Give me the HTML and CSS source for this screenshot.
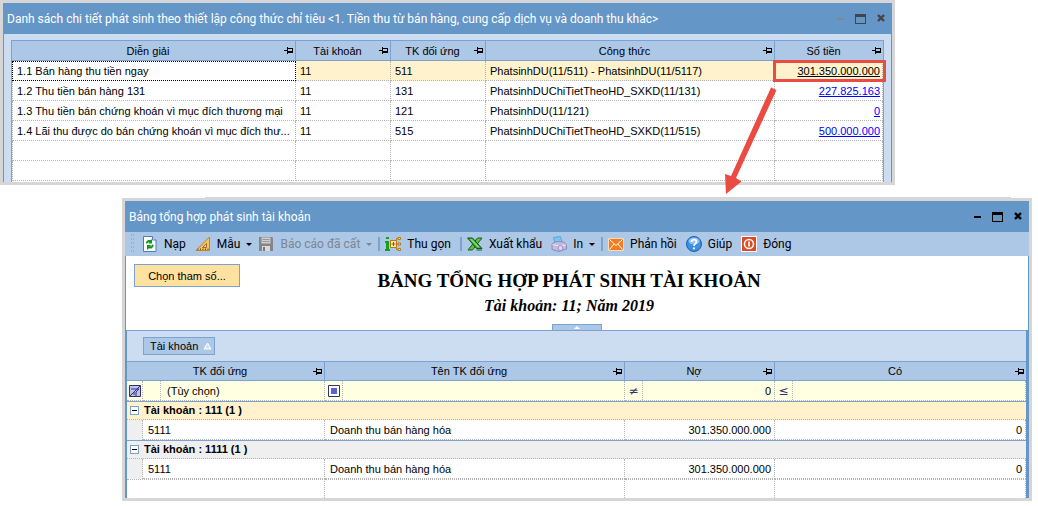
FILE: index.html
```html
<!DOCTYPE html>
<html lang="vi">
<head>
<meta charset="utf-8">
<title>Bảng tổng hợp phát sinh tài khoản</title>
<link rel="stylesheet" href="styles.css">
</head>
<body>
<svg class="defs" aria-hidden="true">
  <symbol id="pin" viewBox="0 0 9 7"><path d="M0 3h3V0h1v1h5v5H4v1H3V4H0zM4 2v2h4V2z" fill="#000" fill-rule="evenodd" shape-rendering="crispEdges"/></symbol>
  <symbol id="min" viewBox="0 0 12 12"><path d="M2 5h7v2H2z" fill="currentColor"/></symbol>
  <symbol id="max" viewBox="0 0 12 12"><path d="M0 1h11v10H0zM1 4v6h9V4z" fill="currentColor" fill-rule="evenodd"/></symbol>
  <symbol id="close" viewBox="0 0 12 12"><path d="M3 2l6 6M9 2l-6 6" stroke="currentColor" stroke-width="2.400" fill="none"/></symbol>
</svg>

<main class="desktop">
  <section class="window window-detail" aria-label="Danh sách chi tiết">
    <header class="titlebar">
      <h1 class="title">Danh sách chi tiết phát sinh theo thiết lập công thức chỉ tiêu &lt;1. Tiền thu từ bán hàng, cung cấp dịch vụ và doanh thu khác&gt;</h1>
      <div class="controls inactive">
        <button class="ctl dim" aria-label="Thu nhỏ"><svg><use href="#min"/></svg></button>
        <button class="ctl" aria-label="Phóng to"><svg><use href="#max"/></svg></button>
        <button class="ctl" aria-label="Đóng cửa sổ"><svg><use href="#close"/></svg></button>
      </div>
    </header>
    <div class="detail-body">
      <div class="panel">
        <table class="grid">
          <colgroup><col class="c-desc"><col class="c-acc"><col class="c-acc"><col><col class="c-amount"></colgroup>
          <thead>
            <tr>
              <th><div class="head"><span>Diễn giải</span><svg class="pin"><use href="#pin"/></svg></div></th>
              <th><div class="head"><span>Tài khoản</span><svg class="pin"><use href="#pin"/></svg></div></th>
              <th><div class="head"><span>TK đối ứng</span><svg class="pin"><use href="#pin"/></svg></div></th>
              <th><div class="head"><span>Công thức</span><svg class="pin"><use href="#pin"/></svg></div></th>
              <th><div class="head"><span>Số tiền</span><svg class="pin"><use href="#pin"/></svg></div></th>
            </tr>
          </thead>
          <tbody>
            <tr class="selected"><td class="focused">1.1 Bán hàng thu tiền ngay</td><td>11</td><td>511</td><td>PhatsinhDU(11/511) - PhatsinhDU(11/5117)</td>
              <td class="num marked"><a href="#report">301.350.000.000</a><span class="mark"></span>
                <svg class="arrow" viewBox="0 0 54 108" aria-hidden="true"><path d="M48 1.500L53.500 4L13 92L18.500 95.500L3 108L2 88L8 90z" fill="#ea4b43"/></svg></td></tr>
            <tr><td>1.2 Thu tiền bán hàng 131</td><td>11</td><td>131</td><td>PhatsinhDUChiTietTheoHD_SXKD(11/131)</td><td class="num"><a href="#report">227.825.163</a></td></tr>
            <tr><td>1.3 Thu tiền bán chứng khoán vì mục đích thương mại</td><td>11</td><td>121</td><td>PhatsinhDU(11/121)</td><td class="num"><a href="#report">0</a></td></tr>
            <tr><td>1.4 Lãi thu được do bán chứng khoán vì mục đích thư...</td><td>11</td><td>515</td><td>PhatsinhDUChiTietTheoHD_SXKD(11/515)</td><td class="num"><a href="#report">500.000.000</a></td></tr>
            <tr><td></td><td></td><td></td><td></td><td></td></tr>
            <tr><td></td><td></td><td></td><td></td><td></td></tr>
          </tbody>
        </table>
      </div>
    </div>
  </section>

  <section class="window window-report" id="report" aria-label="Bảng tổng hợp">
    <header class="titlebar">
      <h1 class="title">Bảng tổng hợp phát sinh tài khoản</h1>
      <div class="controls">
        <button class="ctl" aria-label="Thu nhỏ"><svg><use href="#min"/></svg></button>
        <button class="ctl" aria-label="Phóng to"><svg><use href="#max"/></svg></button>
        <button class="ctl" aria-label="Đóng cửa sổ"><svg><use href="#close"/></svg></button>
      </div>
    </header>
    <div class="toolbar" role="toolbar">
      <span class="grip"></span>
      <button class="tool"><svg class="icon" viewBox="0 0 16 16"><path d="M1.500.5h9l3.500 3.500v11.500H1.500z" fill="#fff" stroke="#4d7db5"/><path d="M10.500.5v3.500H14" fill="#cfe0f5" stroke="#4d7db5"/><path d="M4 7.500V6l2-2h3l1-1v4.500H6.500L7.500 6.500H6L5.500 7.500z" fill="#0f9a1c"/><path d="M11.500 8.500V10.500l-2 2h-3l-1.500 1.500V9h4l-1 1.300h1.200l.8-1.800z" fill="#0f9a1c"/></svg>Nạp</button>
      <button class="tool menu"><svg class="icon" viewBox="0 0 16 16"><path d="M14.500 1v13.500H1z" fill="#f6c35c" stroke="#c08030"/><path d="M11.500 7.500v4h-4z" fill="#c5d6ee" stroke="#a96d20"/><path d="M3 14v-1.500M5.500 14v-1.500M8 14v-1.500M10.500 14v-1.500M13 14v-1.500" stroke="#7c4c10"/></svg>Mẫu<i class="caret"></i></button>
      <button class="tool menu saved" disabled><svg class="icon" viewBox="0 0 16 16"><path d="M1 1h13l1 1v13H1z" fill="#858585"/><path d="M3.500 1.500h9v6h-9z" fill="#cfcfcf"/><path d="M4.500 3.500h7M4.500 5.500h7" stroke="#9a9a9a"/><path d="M4 10h8v5H4z" fill="#d9d9d9"/><path d="M5 11h2v4H5z" fill="#777"/></svg>Báo cáo đã cất<i class="caret"></i></button>
      <span class="sep"></span>
      <button class="tool"><svg class="icon" viewBox="0 0 16 16"><path d="M1 1h3v2H1zM0 5h4v8h1v2H0v-2h1V7H0z" fill="#16a01c"/><path d="M5.500 4.500h6v7h-6z" fill="#ffe9a8" stroke="#b87818"/><path d="M6.500 8h4M8.500 6v4" stroke="#a3540c" fill="none"/><path d="M11.500 4.500V2.500h2M11.500 8h2M11.500 11.500v2h2" stroke="#b87818" fill="none"/><path d="M13 1.500h2.500v2H13zM13 7h2.500v2H13zM13 12.500h2.500v2H13z" fill="#ffe092" stroke="#b87818"/></svg>Thu gọn</button>
      <span class="sep"></span>
      <button class="tool"><svg class="icon" viewBox="0 0 16 16"><path d="M10.500 2H15L5.500 14H1z" fill="#5cbf46" stroke="#12661b"/><path d="M.5 2h5l9.500 10.500h-5.500z" fill="#2e9a35" stroke="#0d5c18"/><path d="M2.500 3h2.500l8 8.500h-2.500z" fill="#8ed66e"/><path d="M9.500 14h5.500" stroke="#12661b"/></svg>Xuất khẩu</button>
      <button class="tool menu print"><svg class="icon" viewBox="0 0 16 16"><path d="M2.500 1.500l7-1l1.500 6l-7 1z" fill="#7cc4f5" stroke="#5aa6dc"/><path d="M1 8l4-2.500l8 .5l2.500 3v4L8 15.500L1 13.500z" fill="#c3bce0" stroke="#8f88be"/><path d="M1.500 8.500l7 1.500l6.500-1" stroke="#e9e5f6" fill="none"/><circle cx="9.500" cy="12" r="2.500" fill="#dcd6f0" stroke="#9b93c6"/></svg>In<i class="caret"></i></button>
      <span class="sep"></span>
      <button class="tool"><svg class="icon" viewBox="0 0 16 16"><path d="M.5 2.500h15v12H.5z" fill="#f47b20" stroke="#ffd9b4"/><path d="M1.500 3.500L8 9.500l6.500-6M1.500 13.500l4.500-5.500M14.500 13.500L10 8" fill="none" stroke="#fff"/></svg>Phản hồi</button>
      <button class="tool"><svg class="icon" viewBox="0 0 16 16"><circle cx="8" cy="8" r="7.500" fill="#3c8fe4" stroke="#1d5fae"/><ellipse cx="8" cy="5" rx="5.500" ry="3.500" fill="#8cc4f7"/><path d="M5.500 6c0-3.500 5.500-3 5 0c0 1.500-2.500 1.800-2.500 4" fill="none" stroke="#fff" stroke-width="1.800"/><path d="M7 11.500h2v1.800H7z" fill="#fff"/></svg>Giúp</button>
      <button class="tool"><svg class="icon" viewBox="0 0 16 16"><path d="M.5.5h15v15H.5z" fill="#df4a22" stroke="#fff"/><circle cx="8" cy="8" r="4.500" fill="none" stroke="#fff" stroke-width="1.600"/><path d="M8 5.500v5" stroke="#fff" stroke-width="1.800"/></svg>Đóng</button>
    </div>

    <div class="report-head">
      <button class="params">Chọn tham số...</button>
      <h2 class="report-title">BẢNG TỔNG HỢP PHÁT SINH TÀI KHOẢN</h2>
      <p class="report-sub">Tài khoản: 11; Năm 2019</p>
      <button class="collapse" aria-label="Thu gọn tham số"><svg viewBox="0 0 6 3"><path d="M0 3h6L3 0z" fill="#fff"/></svg></button>
    </div>

    <div class="report-grid">
      <div class="groupbar">
        <button class="chip">Tài khoản<svg class="sort" viewBox="0 0 9 8"><path d="M4.500 1L8 7H1z" fill="#d3e0f2" stroke="#fff"/></svg></button>
      </div>
      <table class="grid">
        <colgroup><col class="r-indent"><col class="r-acc"><col class="r-name"><col class="r-debit"><col></colgroup>
        <thead>
          <tr>
            <th colspan="2"><div class="head"><span>TK đối ứng</span><svg class="pin"><use href="#pin"/></svg></div></th>
            <th><div class="head"><span>Tên TK đối ứng</span><svg class="pin"><use href="#pin"/></svg></div></th>
            <th><div class="head"><span>Nợ</span><svg class="pin"><use href="#pin"/></svg></div></th>
            <th><div class="head"><span>Có</span><svg class="pin"><use href="#pin"/></svg></div></th>
          </tr>
        </thead>
        <tbody>
          <tr class="filter">
            <td class="indent"><button class="clear" aria-label="Bỏ lọc"><svg viewBox="0 0 12 12"><path d="M.5.5h11v11H.5z" fill="#b9c3ee" stroke="#33336b"/><path d="M2 4h8L7 7v4M5 7v3M1 11L11 1" fill="none" stroke="#33337c"/></svg></button></td>
            <td><div class="cell"><button class="op" aria-label="Điều kiện tài khoản"></button><input aria-label="Lọc TK đối ứng" value="(Tùy chọn)"></div></td>
            <td><div class="cell"><button class="op" aria-label="Điều kiện tên"><svg viewBox="0 0 12 12"><path d="M.5.5h11v11H.5z" fill="#fff" stroke="#33336b"/><path d="M3 3h6v6H3z" fill="#5e62cc"/></svg></button><input aria-label="Lọc tên"></div></td>
            <td><div class="cell"><button class="op">≠</button><input class="right" aria-label="Lọc nợ" value="0"></div></td>
            <td><div class="cell"><button class="op">≤</button><input class="right" aria-label="Lọc có"></div></td>
          </tr>
          <tr class="group current"><td colspan="5"><div class="cell"><button class="toggle" aria-label="Thu gọn nhóm 111"></button>Tài khoản : 111 (1 )</div></td></tr>
          <tr><td class="indent gray"></td><td>5111</td><td>Doanh thu bán hàng hóa</td><td class="num">301.350.000.000</td><td class="num">0</td></tr>
          <tr class="group"><td colspan="5"><div class="cell"><button class="toggle" aria-label="Thu gọn nhóm 1111"></button>Tài khoản : 1111 (1 )</div></td></tr>
          <tr><td class="indent gray"></td><td>5111</td><td>Doanh thu bán hàng hóa</td><td class="num">301.350.000.000</td><td class="num">0</td></tr>
          <tr class="blank"><td colspan="2"></td><td></td><td></td><td></td></tr>
        </tbody>
      </table>
    </div>
  </section>
</main>
</body>
</html>
```
FILE: styles.css
```css
* { box-sizing: border-box; }

:root {
  --title: #6496c8;
  --bar: #adc7e7;
  --pale: #ccdcf1;
  --line: #7ba2d0;
  --dots: #b4b4b4;
  --ui: Roboto, "Open Sans", sans-serif;
  --data: "Liberation Sans", Arial, sans-serif;
}

body {
  margin: 0;
  background: #fff;
  color: #000;
  font: 11px/18px var(--data);
}

button, input {
  margin: 0;
  padding: 0;
  border: 0;
  background: none;
  color: inherit;
  font: inherit;
}

.defs { display: none; }

.desktop {
  display: flex;
  flex-direction: column;
  gap: 13px;
}

/* Windows */
.window {
  position: relative;
  border: 3px solid #d6d6d6;
}
.window-detail { margin-right: 143px; z-index: 2; }
.window-report { margin: 0 6px 0 122px; }
.window-report::before {
  content: "";
  position: absolute;
  top: -4px;
  left: 80px;
  right: 18px;
  height: 1px;
  background: #d6d6d6;
}

.titlebar {
  display: flex;
  align-items: center;
  justify-content: space-between;
  height: 31px;
  padding: 0 5px 0 4px;
  background: var(--title);
}
.title {
  margin: 0;
  color: #fff;
  font: 12px/18px var(--ui);
  white-space: nowrap;
}
.controls { display: flex; gap: 8px; }
.inactive { color: #444; }
.ctl { display: flex; }
.ctl svg { width: 12px; height: 12px; }
.dim { color: #858585; }

/* Data grids */
.detail-body {
  padding: 6px 7px 0;
  background: var(--pale);
  border: solid var(--title);
  border-width: 0 1px;
}
.panel {
  padding-bottom: 1px;
  background: #fff;
  border: solid var(--line);
  border-width: 0 1px;
}
.grid {
  width: 100%;
  table-layout: fixed;
  border-collapse: separate;
  border-spacing: 0;
}
.c-desc { width: 284px; }
.c-acc { width: 95px; }
.c-amount { width: 108px; }

th {
  height: 20px;
  padding: 0;
  background: var(--bar);
  border: solid var(--line);
  border-width: 1px 1px 1px 0;
  font-weight: normal;
}
.panel th { height: 21px; }
th:last-child { border-right-width: 0; }
.head {
  display: flex;
  align-items: center;
  padding-right: 2px;
}
.head span { flex: 1; }
.pin { width: 9px; height: 7px; }

td {
  height: 20px;
  padding: 0 2px 0 4px;
  border: dotted var(--dots);
  border-width: 0 1px 1px 0;
  white-space: nowrap;
}
.panel td:first-child { border-left-width: 1px; }
.num { text-align: right; }
.num a { color: #00f; }
.selected { background: #fff2cc; }
.selected a { color: #000; }
.selected .focused { background: #fff; outline: 1px dotted #000; outline-offset: -1px; }

/* Callout on the clicked amount */
.marked { position: relative; }
.mark {
  position: absolute;
  inset: -1px -4px -2px -2px;
  border: 3px solid #ea4b43;
}
.arrow {
  position: absolute;
  top: 25px;
  left: -52px;
  width: 54px;
  height: 108px;
}

/* Toolbar */
.toolbar {
  display: flex;
  align-items: center;
  height: 24px;
  padding-left: 5px;
  background: var(--bar);
  font: 12px/18px var(--ui);
}
.grip {
  width: 4px;
  height: 20px;
  margin-right: 8px;
  background: conic-gradient(#93afd2 25%, transparent 0) 0 0 / 2px 4px;
}
.tool {
  display: flex;
  align-items: center;
  gap: 6px;
  margin-right: 9px;
  white-space: nowrap;
}
.tool.menu { margin-right: 6px; }
.icon { width: 16px; height: 16px; }
.caret {
  border: 3px solid transparent;
  border-top-color: currentColor;
  border-bottom-width: 0;
}
.saved { color: #7d8691; }
.sep {
  width: 2px;
  height: 14px;
  margin-right: 5px;
  background: var(--line);
}

/* Report heading */
.report-head {
  position: relative;
  height: 74px;
  padding: 13px 16px 0 0;
  border: solid var(--title);
  border-width: 0 1px;
  text-align: center;
}
.params {
  position: absolute;
  top: 8px;
  left: 8px;
  width: 106px;
  height: 23px;
  background: #ffe29f;
  border: 1px solid var(--line);
}
.report-title, .report-sub {
  margin: 0;
  font: bold 19px/24px "Liberation Serif", "Times New Roman", serif;
}
.report-sub { font-size: 16px; font-style: italic; line-height: 26px; }
.collapse {
  position: absolute;
  bottom: 0;
  left: 50%;
  display: flex;
  justify-content: center;
  width: 50px;
  height: 6px;
  margin-left: -25px;
  padding-top: 1px;
  background: var(--bar);
  border: solid var(--line);
  border-width: 1px 1px 0;
}
.collapse svg { width: 6px; height: 3px; }

.report-grid {
  border: solid var(--title);
  border-width: 0 3px 0 2px;
}
.report-grid td { padding: 0 3px 0 5px; }
.groupbar {
  height: 31px;
  padding: 6px 16px;
  background: var(--pale);
  border-top: 1px solid var(--line);
}
.chip {
  display: flex;
  align-items: center;
  gap: 5px;
  height: 18px;
  padding: 0 2px 0 6px;
  background: var(--bar);
  border: 1px solid var(--line);
}
.sort { width: 9px; height: 8px; }

.r-indent { width: 16px; }
.r-acc { width: 182px; }
.r-name { width: 300px; }
.r-debit { width: 150px; }

.filter { background: #ffffe1; }
.report-grid .filter td { padding: 0; }
.cell { display: flex; align-items: center; }
.cell input { flex: 1; min-width: 0; height: 19px; padding: 0 3px 0 6px; }
.cell .right { text-align: right; }
.op {
  display: flex;
  align-items: center;
  justify-content: center;
  width: 18px;
  height: 19px;
  border-right: 1px dotted var(--dots);
  color: #33336b;
  font: 12px/18px "DejaVu Sans", sans-serif;
}
.op svg, .clear svg { display: block; width: 12px; height: 12px; }
.clear { display: block; margin-left: 2px; }

.report-grid .group td {
  height: 19px;
  padding: 0 4px 0 3px;
  background: #efefef;
  border-top: 1px solid var(--line);
  border-right-width: 0;
  font-weight: bold;
  line-height: 17px;
}
.report-grid .current td { background: #fff2cc; }
.group .cell { gap: 5px; }
.toggle {
  display: flex;
  align-items: center;
  justify-content: center;
  width: 9px;
  height: 9px;
  background: #fff;
  border: 1px solid var(--line);
}
.toggle::before { content: ""; width: 5px; height: 1px; background: #000; }
.gray { background: #efefef; border-bottom: 0; }
.blank td { height: 19px; border-top-width: 1px; border-bottom-width: 0; }
```
